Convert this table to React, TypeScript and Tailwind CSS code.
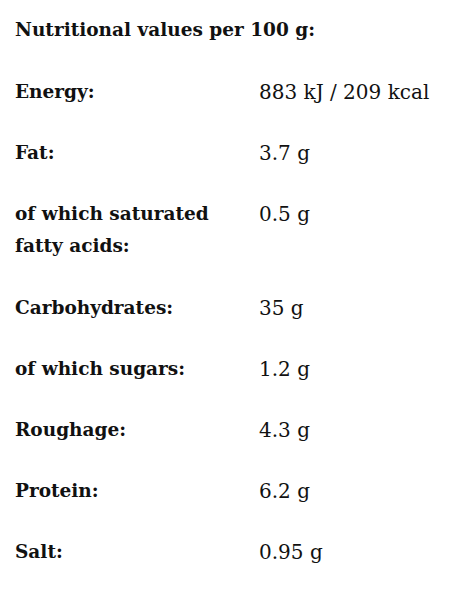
import React from "react";

const rows: { label: string[]; value: string }[] = [
  { label: ["Energy:"], value: "883 kJ / 209 kcal" },
  { label: ["Fat:"], value: "3.7 g" },
  { label: ["of which saturated", "fatty acids:"], value: "0.5 g" },
  { label: ["Carbohydrates:"], value: "35 g" },
  { label: ["of which sugars:"], value: "1.2 g" },
  { label: ["Roughage:"], value: "4.3 g" },
  { label: ["Protein:"], value: "6.2 g" },
  { label: ["Salt:"], value: "0.95 g" },
];

export default function App() {
  return (
    <div
      className="w-[449px] h-[601px] bg-white text-[#111] px-[15px] pt-[14px]"
      style={{ fontFamily: '"DejaVu Serif", serif' }}
    >
      <h2 className="text-[18.5px] font-bold leading-[32px] pb-[15.5px]">Nutritional values per 100 g:</h2>
      <div className="flex flex-col">
        {rows.map((r) => (
          <div key={r.value} className="flex py-[14.6px] leading-[32px]">
            <div className="w-[244px] shrink-0 font-bold text-[18.5px]">
              {r.label.map((l) => (
                <div key={l}>{l}</div>
              ))}
            </div>
            <div className="font-normal text-[20px]">{r.value}</div>
          </div>
        ))}
      </div>
    </div>
  );
}
